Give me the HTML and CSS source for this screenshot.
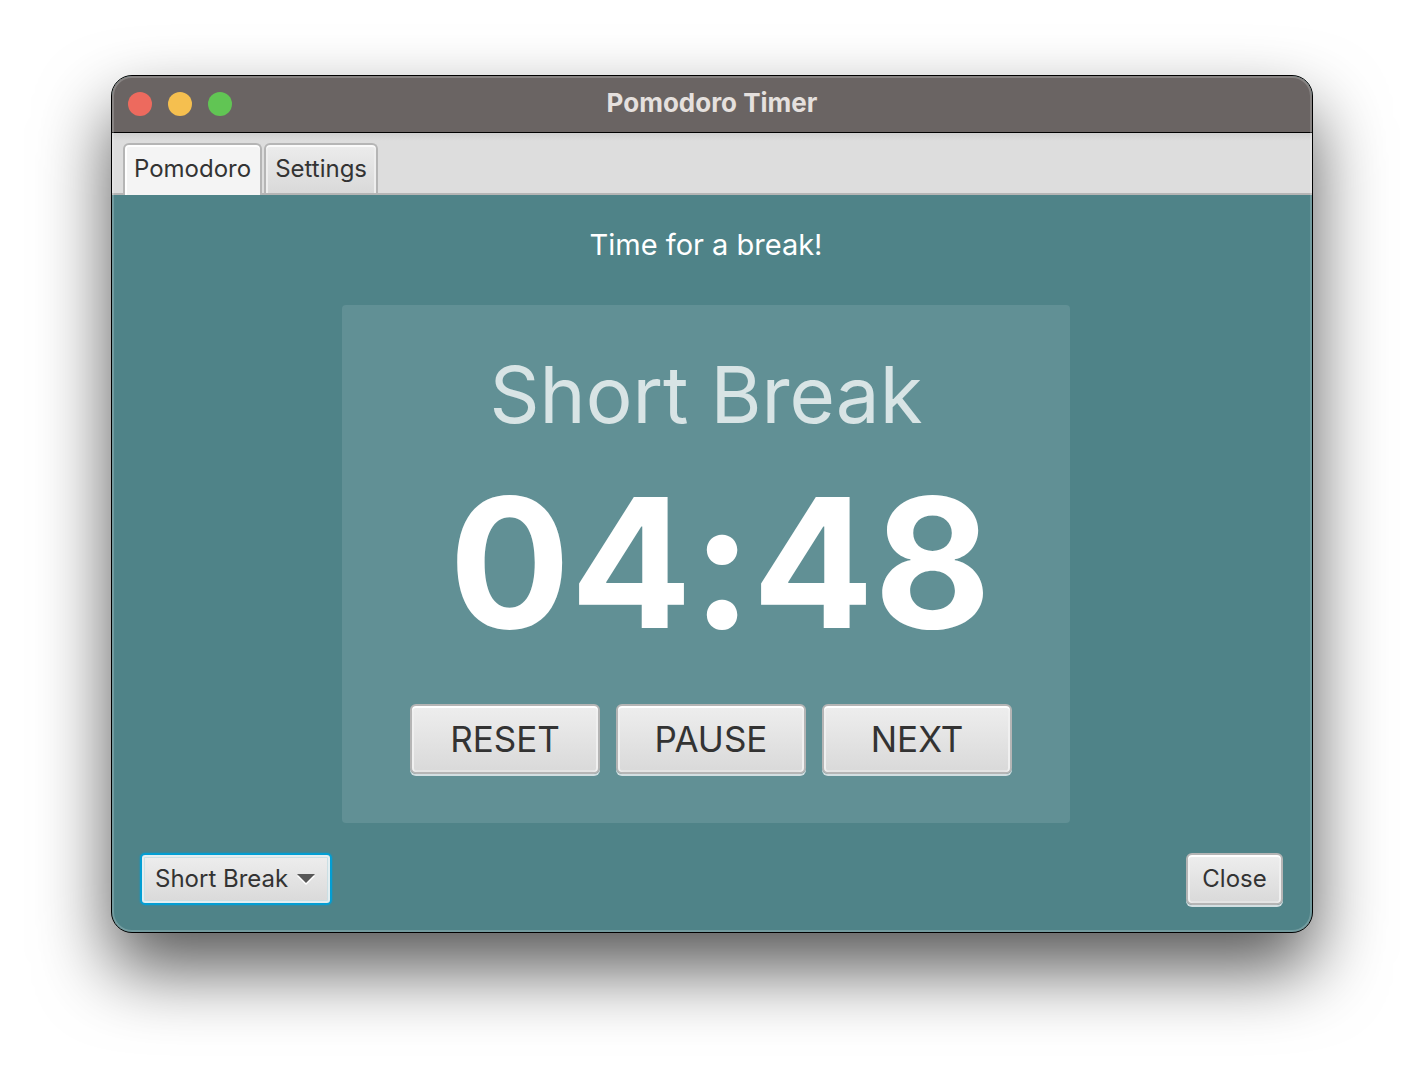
FILE: index.html
```html
<!DOCTYPE html>
<html lang="en">
<head>
<meta charset="utf-8">
<title>Pomodoro Timer</title>
<link rel="stylesheet" href="styles.css">
</head>
<body>
<main class="window">
  <header class="titlebar">
    <div class="lights">
      <button class="light light-close" aria-label="Close window"></button>
      <button class="light light-minimize" aria-label="Minimize window"></button>
      <button class="light light-zoom" aria-label="Zoom window"></button>
    </div>
    <h1 class="title">Pomodoro Timer</h1>
  </header>
  <nav class="tabs" role="tablist">
    <button class="tab tab-active" role="tab" aria-selected="true">Pomodoro</button>
    <button class="tab" role="tab" aria-selected="false">Settings</button>
  </nav>
  <section class="stage">
    <p class="message">Time for a break!</p>
    <div class="card">
      <h2 class="mode">Short Break</h2>
      <div class="time" role="timer">04:48</div>
      <div class="actions">
        <button class="btn btn-large">RESET</button>
        <button class="btn btn-large">PAUSE</button>
        <button class="btn btn-large">NEXT</button>
      </div>
    </div>
  </section>
  <footer class="footer">
    <label class="combo">
      <select class="combo-select" aria-label="Timer mode">
        <option>Pomodoro</option>
        <option selected>Short Break</option>
        <option>Long Break</option>
      </select>
      <svg class="combo-arrow" width="18" height="11" viewBox="0 0 18 11" aria-hidden="true">
        <path d="M0 2h18L9 11z" fill="#fff"/>
        <path d="M0 0h18L9 9z" fill="#575757"/>
      </svg>
    </label>
    <button class="btn btn-small">Close</button>
  </footer>
</main>
</body>
</html>
```

FILE: styles.css
```css
* { box-sizing: border-box; }

body {
  min-height: 100vh;
  margin: 0;
  padding: 75px 111px;
  background: #fff;
  color: #333;
  font-family: Inter, "Liberation Sans", sans-serif;
  font-feature-settings: "calt" 0;
}

button, select { font: inherit; color: inherit; }

h1, h2, p { margin: 0; font-weight: 400; }

.window {
  position: relative;
  display: flex;
  flex-direction: column;
  border: 1px solid #000;
  border-radius: 21px;
  background: #4f8388;
  box-shadow: 0 36px 72px rgba(0, 0, 0, 0.66);
}

/* Light rim along the inside of the window frame */
.window::after {
  content: "";
  position: absolute;
  inset: 0;
  border-radius: 20px;
  box-shadow: inset 0 0 0 2px rgba(255, 255, 255, 0.2);
  pointer-events: none;
}

.titlebar {
  display: grid;
  grid-template-columns: 1fr auto 1fr;
  align-items: center;
  height: 57px;
  padding: 0 16px;
  border-bottom: 1px solid #000;
  border-radius: 20px 20px 0 0;
  background: #6a6463;
}

.lights { display: flex; gap: 16px; }

.light {
  width: 24px;
  height: 24px;
  padding: 0;
  border: 0;
  border-radius: 50%;
}

.light-close { background: #ed6a5e; }
.light-minimize { background: #f5bf4f; }
.light-zoom { background: #61c554; }

.title {
  padding-bottom: 2px;
  color: #e5e0de;
  font-size: 26px;
  line-height: 32px;
  font-weight: 700;
}

.tabs {
  display: flex;
  align-items: flex-end;
  gap: 2px;
  height: 62px;
  padding: 0 11px;
  border-bottom: 2px solid #b5b5b5;
  background: linear-gradient(#cfcfcf, #ddd 8px);
}

.tab {
  height: 50px;
  padding: 0 9px;
  border: 2px solid #b5b5b5;
  border-bottom: 0;
  border-radius: 6px 6px 0 0;
  background: linear-gradient(#ececec, #d9d9d9);
  box-shadow: inset 0 2px #fafafa, inset 2px 0 #eee, inset -2px 0 #eee;
  font-size: 24px;
  line-height: 32px;
}

.tab-active {
  height: 52px;
  margin-bottom: -2px;
  padding-bottom: 2px;
  background: #f4f4f4;
  box-shadow: inset 0 2px #fff, inset 2px 0 #fff;
}

.stage {
  display: flex;
  flex-direction: column;
  align-items: center;
  gap: 40px;
  padding: 29px 12px 0 0;
}

.message {
  color: #fff;
  font-size: 29px;
  line-height: 41px;
}

.card {
  display: flex;
  flex-direction: column;
  align-items: center;
  width: 728px;
  max-width: 100%;
  padding: 38px 58px 49px;
  border-radius: 4px;
  background: #619095;
}

.mode {
  color: #d8e4e5;
  font-size: 78px;
  line-height: 104px;
}

.time {
  padding-left: 28px;
  color: #fff;
  font-size: 180px;
  line-height: 232px;
  font-weight: 700;
}

.actions {
  display: flex;
  gap: 16px;
  padding: 25px 0 0 10px;
}

.btn {
  padding: 0;
  border: 2px solid #b5b5b5;
  border-radius: 6px;
  background: linear-gradient(#eee, #d9d9d9);
  box-shadow: inset 0 2px #fff, inset 2px 0 #f0f0f0, inset -2px 0 #f0f0f0, inset 0 -2px #e4e4e4, 0 2px #d3dfe2;
}

.btn-large {
  width: 190px;
  height: 70px;
  font-size: 35px;
  line-height: 44px;
}

.btn-small {
  width: 97px;
  height: 52px;
  font-size: 24px;
  line-height: 32px;
}

.footer {
  display: flex;
  justify-content: space-between;
  padding: 30px 29px 27px 28px;
}

.combo { display: grid; }

.combo-select, .combo-arrow { grid-area: 1 / 1; }

.combo-select {
  appearance: none;
  width: 192px;
  height: 52px;
  padding: 0 0 0 13px;
  border: 2px solid #039ed3;
  border-radius: 5px;
  background: linear-gradient(#eee, #d9d9d9);
  box-shadow: inset 0 0 0 2px #e4eef1, inset 0 0 0 3px #cbdfe4, 0 0 2px #039ed3;
  font-size: 24px;
  line-height: 32px;
  outline: 0;
}

.combo-arrow {
  align-self: center;
  justify-self: end;
  margin-right: 17px;
  pointer-events: none;
}
```
